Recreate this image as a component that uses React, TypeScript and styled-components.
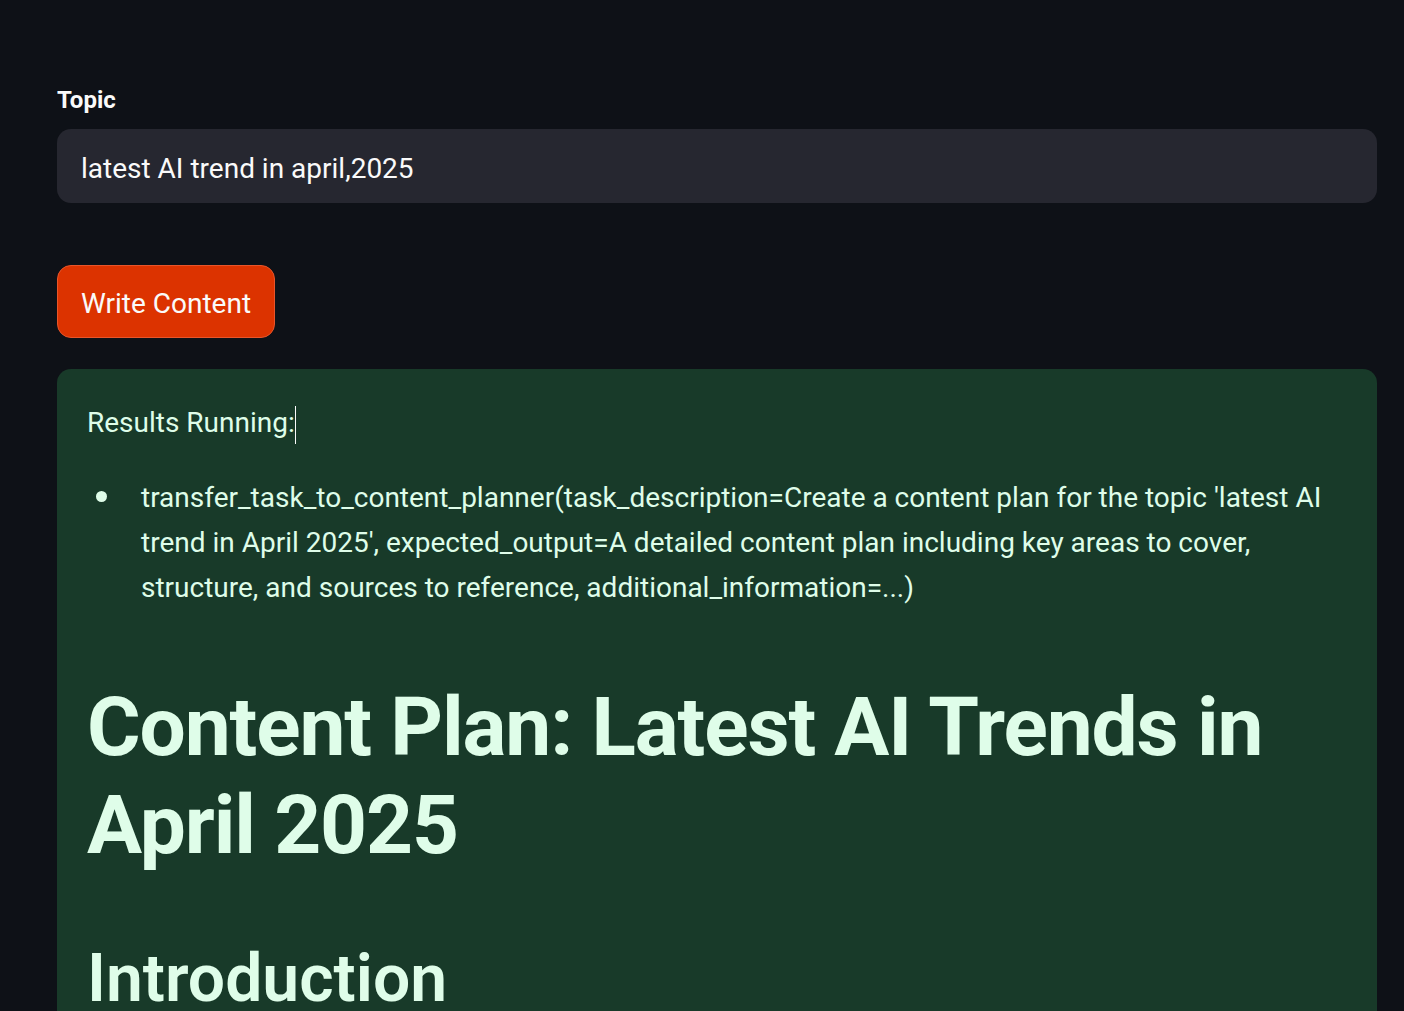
import React from "react";
import styled, { createGlobalStyle } from "styled-components";

const Global = createGlobalStyle`
  html, body { margin: 0; padding: 0; background: #0e1117; }
  body { font-family: Roboto, "Noto Sans", sans-serif; color: #fafafa; overflow: hidden; }
`;

const Main = styled.main`
  padding: 82px 27px 0 57px;
  display: flex;
  flex-direction: column;
`;

const Label = styled.label`
  font-size: 24px;
  font-weight: 700;
  line-height: 36px;
  color: #fafafa;
  margin-bottom: 11px;
`;

const Input = styled.input`
  box-sizing: border-box;
  height: 74px;
  width: 100%;
  border: none;
  outline: none;
  border-radius: 14px;
  background: #262730;
  color: #fafafa;
  font-family: inherit;
  font-size: 28px;
  padding: 5px 24px 0 24px;
`;

const Button = styled.button`
  align-self: flex-start;
  margin-top: 62px;
  box-sizing: border-box;
  height: 73px;
  padding: 3px 23px 0 23px;
  border-radius: 14px;
  border: 1px solid #e8552a;
  background: #dc3300;
  color: #fafafa;
  font-family: inherit;
  font-size: 28px;
`;

const Alert = styled.div`
  margin-top: 31px;
  border-radius: 14px 14px 0 0;
  background: #183a29;
  color: #dffde9;
  padding: 31px 30px 40px 30px;
  min-height: 620px;
`;

const Para = styled.p`
  margin: 0;
  font-size: 28px;
  line-height: 45px;
`;

const Caret = styled.span`
  display: inline-block;
  width: 1px;
  height: 38px;
  background: #fafafa;
  vertical-align: middle;
`;

const List = styled.ul`
  margin: 28px 0 0 0;
  padding-left: 37px;
`;

const Item = styled.li`
  padding-left: 17px;
  font-size: 28px;
  line-height: 45px;
  &::marker {
    font-size: 34px;
  }
`;

const H1 = styled.h1`
  margin: 68px 0 0 0;
  font-size: 82px;
  line-height: 98px;
  font-weight: 700;
  letter-spacing: -1.1px;
`;

const H2 = styled.h2`
  margin: 64px 0 0 0;
  font-size: 66px;
  line-height: 82px;
  font-weight: 600;
  letter-spacing: 0;
`;

export default function App() {
  return (
    <>
      <Global />
      <Main>
        <Label>Topic</Label>
        <Input defaultValue="latest AI trend in april,2025" />
        <Button>Write Content</Button>
        <Alert>
          <Para>
            Results Running:<Caret />
          </Para>
          <List>
            <Item>
              transfer_task_to_content_planner(task_description=Create a content plan for the topic 'latest AI
              trend in April 2025', expected_output=A detailed content plan including key areas to cover,
              structure, and sources to reference, additional_information=...)
            </Item>
          </List>
          <H1>Content Plan: Latest AI Trends in April 2025</H1>
          <H2>Introduction</H2>
        </Alert>
      </Main>
    </>
  );
}
